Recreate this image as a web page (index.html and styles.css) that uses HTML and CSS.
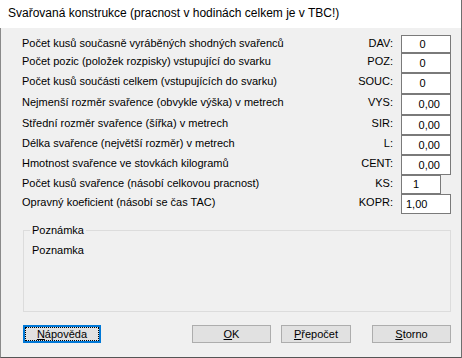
FILE: index.html
```html
<!DOCTYPE html>
<html lang="cs">
<head>
<meta charset="utf-8">
<title>Svařovaná konstrukce</title>
<link rel="stylesheet" href="styles.css">
</head>
<body>
<div class="window">
  <div class="titlebar">Svařovaná konstrukce (pracnost v hodinách celkem je v TBC!)</div>
  <div class="client">
    <div class="form">
      <div class="lbl r1">Počet kusů současně vyráběných shodných svařenců</div>
      <div class="code r1">DAV:</div>
      <div class="box r1 center">0</div>

      <div class="lbl r2">Počet pozic (položek rozpisky) vstupující do svarku</div>
      <div class="code r2">POZ:</div>
      <div class="box r2 center">0</div>

      <div class="lbl r3">Počet kusů součásti celkem (vstupujících do svarku)</div>
      <div class="code r3">SOUC:</div>
      <div class="box r3 center">0</div>

      <div class="lbl r4">Nejmenší rozměr svařence (obvykle výška) v metrech</div>
      <div class="code r4">VYS:</div>
      <div class="box r4 right">0,00</div>

      <div class="lbl r5">Střední rozměr svařence (šířka) v metrech</div>
      <div class="code r5">SIR:</div>
      <div class="box r5 right">0,00</div>

      <div class="lbl r6">Délka svařence (největší rozměr) v metrech</div>
      <div class="code r6">L:</div>
      <div class="box r6 right">0,00</div>

      <div class="lbl r7">Hmotnost svařence ve stovkách kilogramů</div>
      <div class="code r7">CENT:</div>
      <div class="box r7 right">0,00</div>

      <div class="lbl r8">Počet kusů svařence (násobí celkovou pracnost)</div>
      <div class="code r8">KS:</div>
      <div class="box r8 narrow">1</div>

      <div class="lbl r9">Opravný koeficient (násobí se čas TAC)</div>
      <div class="code r9">KOPR:</div>
      <div class="box r9 left">1,00</div>
    </div>

    <fieldset class="group">
      <legend>Poznámka</legend>
      <div class="note">Poznamka</div>
    </fieldset>

    <div class="buttons">
      <div class="btn btn-help focused"><span class="focus"><u>N</u>ápověda</span></div>
      <div class="spacer"></div>
      <div class="btn btn-ok"><u>O</u>K</div>
      <div class="btn btn-calc"><u>P</u>řepočet</div>
      <div class="btn btn-cancel"><u>S</u>torno</div>
    </div>
  </div>
</div>
</body>
</html>
```

FILE: styles.css
```css
html, body {
  margin: 0;
  padding: 0;
  background: #ffffff;
}

.window {
  width: 462px;
  height: 358px;
  display: flex;
  flex-direction: column;
  box-sizing: border-box;
  border-right: 1px solid #6e6e6e;
  font-family: "Liberation Sans", Arial, sans-serif;
  font-size: 11px;
  color: #000;
}

.titlebar {
  height: 28px;
  flex: none;
  box-sizing: border-box;
  padding: 6px 0 0 8px;
  background: #ffffff;
  font-family: "Liberation Sans", Arial, sans-serif;
  font-size: 12px;
  line-height: 15px;
  color: #000;
  white-space: nowrap;
}

.client {
  flex: 1;
  background: #f0f0f0;
  border-left: 1px solid #8a8a8a;
  border-bottom: 1px solid #555;
  padding: 7px 10px 0 21px;
  display: flex;
  flex-direction: column;
}

.form {
  display: grid;
  grid-template-columns: 1fr 50px 50px;
  grid-template-rows: 18px 20px 21px 21px 20px 20px 20px 19px 20px;
  line-height: 13px;
}

.lbl {
  grid-column: 1;
  padding-top: 2px;
  white-space: nowrap;
}

.code {
  grid-column: 2;
  text-align: right;
  padding-right: 8px;
  padding-top: 2px;
}

.box {
  grid-column: 3;
  background: #fff;
  border: 1px solid #7a7a7a;
  box-sizing: border-box;
  display: flex;
  align-items: center;
}

.r1 { grid-row: 1; }
.r2 { grid-row: 2; }
.r3 { grid-row: 3; }
.r4 { grid-row: 4; }
.r5 { grid-row: 5; }
.r6 { grid-row: 6; }
.r7 { grid-row: 7; }
.r8 { grid-row: 8; }
.r9 { grid-row: 9; }

.box.center { justify-content: center; padding-right: 7px; }
.box.right { justify-content: flex-end; padding-right: 10px; }
.box.narrow { width: 40px; padding-left: 11px; }
.box.left { padding-left: 4px; }

.group {
  margin: 10px 0 0 1px;
  padding: 0 6px 0 8px;
  border: 1px solid #dcdcdc;
  height: 88px;
  box-sizing: border-box;
  min-width: 0;
}

.group legend {
  padding: 0 2px;
  margin-left: -2px;
  line-height: 13px;
}

.note {
  padding-top: 7px;
  line-height: 13px;
}

.buttons {
  display: flex;
  margin-top: 13px;
  margin-left: 1px;
  height: 18px;
}

.spacer { flex: 1; }

.btn {
  box-sizing: border-box;
  height: 18px;
  background: #e1e1e1;
  border: 1px solid #adadad;
  display: flex;
  align-items: center;
  justify-content: center;
  line-height: 13px;
}

.btn-help { width: 78px; }
.btn-ok { width: 79px; }
.btn-calc { width: 70px; margin-left: 10px; }
.btn-cancel { width: 79px; margin-left: 21px; }

.btn.focused {
  border: 1px solid #0078d7;
  box-shadow: inset 0 0 0 1px #0078d7;
  padding: 2px;
}

.btn .focus {
  flex: 1;
  align-self: stretch;
  display: flex;
  align-items: center;
  justify-content: center;
  outline: 1px dotted #000;
}
```
